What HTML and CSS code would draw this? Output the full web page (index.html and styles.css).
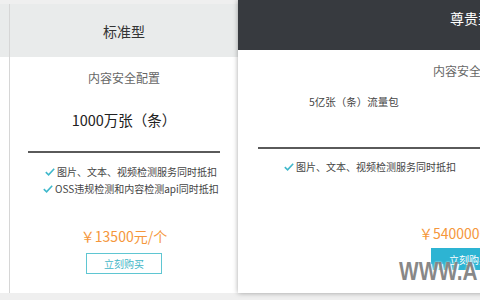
FILE: index.html
```html
<!DOCTYPE html>
<html>
<head>
<meta charset="utf-8">
<link rel="stylesheet" href="styles.css">
</head>
<body>
<div class="row">
  <div class="card prev">
    <div class="head"></div>
    <div class="body"></div>
  </div>
  <div class="card std">
    <div class="head">标准型</div>
    <div class="body">
      <div class="conf">内容安全配置</div>
      <div class="qty">1000万张（条）</div>
      <div class="rule"></div>
      <ul class="feats">
        <li><svg class="chk" viewBox="0 0 10 8"><path d="M0.8 4.2 L3.6 6.8 L9.2 0.8"/></svg>图片、文本、视频检测服务同时抵扣</li>
        <li><svg class="chk" viewBox="0 0 10 8"><path d="M0.8 4.2 L3.6 6.8 L9.2 0.8"/></svg>OSS违规检测和内容检测api同时抵扣</li>
      </ul>
      <div class="price">￥13500元/个</div>
      <div class="btn">立刻购买</div>
    </div>
  </div>
  <div class="card vip">
    <div class="head">尊贵型</div>
    <div class="body">
      <div class="conf">内容安全配置</div>
      <div class="pack">5亿张（条）流量包</div>
      <div class="rule"></div>
      <ul class="feats">
        <li><svg class="chk" viewBox="0 0 10 8"><path d="M0.8 4.2 L3.6 6.8 L9.2 0.8"/></svg>图片、文本、视频检测服务同时抵扣</li>
      </ul>
      <div class="price">￥540000元/个</div>
      <div class="btn">立刻购买</div>
    </div>
  </div>
</div>
<div class="mark">WWW.A</div>
</body>
</html>
```
FILE: styles.css
```css
html, body {
  margin: 0;
  padding: 0;
}
body {
  width: 480px;
  height: 300px;
  overflow: hidden;
  background: #efefef;
  font-family: "Noto Sans CJK SC", "Liberation Sans", sans-serif;
  color: #333;
  position: relative;
}
.row {
  display: flex;
  align-items: flex-start;
  padding-top: 4px;
}
.card {
  display: flex;
  flex-direction: column;
  flex: none;
}
.prev {
  width: 9px;
}
.prev .head {
  height: 53px;
  background: #e9ebeb;
}
.prev .body {
  height: 236px;
  background: #fff;
}
.std {
  width: 228px;
  border-left: 1px solid #d6d6d6;
}
.std .head {
  height: 53px;
  background: #e9ebeb;
  display: flex;
  align-items: center;
  justify-content: center;
  font-size: 14px;
  color: #333;
}
.std .body {
  height: 236px;
  background: #fff;
  display: flex;
  flex-direction: column;
  align-items: center;
}
.conf {
  font-size: 12px;
  line-height: 16px;
  color: #666;
}
.std .conf {
  margin-top: 13px;
}
.qty {
  font-size: 14.5px;
  line-height: 20px;
  margin-top: 24px;
  color: #222;
}
.rule {
  height: 2px;
  background: #5a5a5a;
}
.std .rule {
  width: 192px;
  margin-top: 21px;
  align-self: flex-start;
  margin-left: 18px;
}
.feats {
  list-style: none;
  margin: 0;
  padding: 0;
}
.feats li {
  display: flex;
  align-items: center;
  font-size: 10px;
  line-height: 17px;
  color: #444;
  white-space: nowrap;
}
.chk {
  width: 10px;
  height: 8px;
  margin-right: 2px;
  fill: none;
  stroke: #3fb8cb;
  stroke-width: 1.6;
}
.std .feats {
  margin-top: 10px;
  align-self: flex-start;
  margin-left: 33px;
}
.std .feats li:first-child {
  margin-left: 2px;
}
.price {
  font-size: 14px;
  line-height: 18px;
  color: #f5973b;
  white-space: nowrap;
}
.std .price {
  margin-top: 30px;
}
.btn {
  width: 76px;
  height: 21px;
  box-sizing: border-box;
  display: flex;
  align-items: center;
  justify-content: center;
  font-size: 10px;
}
.std .btn {
  margin-top: 8px;
  border: 1px solid #5fc6d2;
  color: #3fb6c7;
}
.vip {
  width: 466px;
  margin-top: -4px;
  box-shadow: 0 0 5px rgba(0, 0, 0, 0.35);
  position: relative;
  z-index: 1;
}
.vip .head {
  height: 50px;
  background: #373a3f;
  color: #fff;
  font-size: 14px;
  display: flex;
  justify-content: center;
  padding-top: 9px;
  box-sizing: border-box;
  line-height: 18px;
}
.vip .body {
  height: 243px;
  background: #fff;
  display: flex;
  flex-direction: column;
}
.vip .conf {
  margin-top: 13px;
  align-self: center;
  margin-left: -4px;
}
.pack {
  font-size: 10.5px;
  line-height: 16px;
  margin-top: 15px;
  margin-left: 71px;
  color: #444;
}
.vip .rule {
  margin-top: 37px;
  margin-left: 20px;
  width: 446px;
}
.vip .feats {
  margin-top: 9px;
  margin-left: 46px;
}
.vip .price {
  margin-top: 49px;
  align-self: center;
  margin-left: -10px;
}
.vip .btn {
  margin-top: 6px;
  align-self: center;
  margin-left: -4px;
  background: #2db4d3;
  color: #fff;
  height: 22px;
}
.mark {
  position: absolute;
  left: 399px;
  top: 256px;
  z-index: 2;
  font-family: "Liberation Sans", sans-serif;
  font-weight: bold;
  font-size: 26px;
  line-height: 30px;
  white-space: nowrap;
  transform: scaleX(0.8);
  transform-origin: left center;
  color: rgba(115, 115, 115, 0.85);
  text-shadow: 0 0 2px #fff, 2px 2px 1px #fff;
}
```
